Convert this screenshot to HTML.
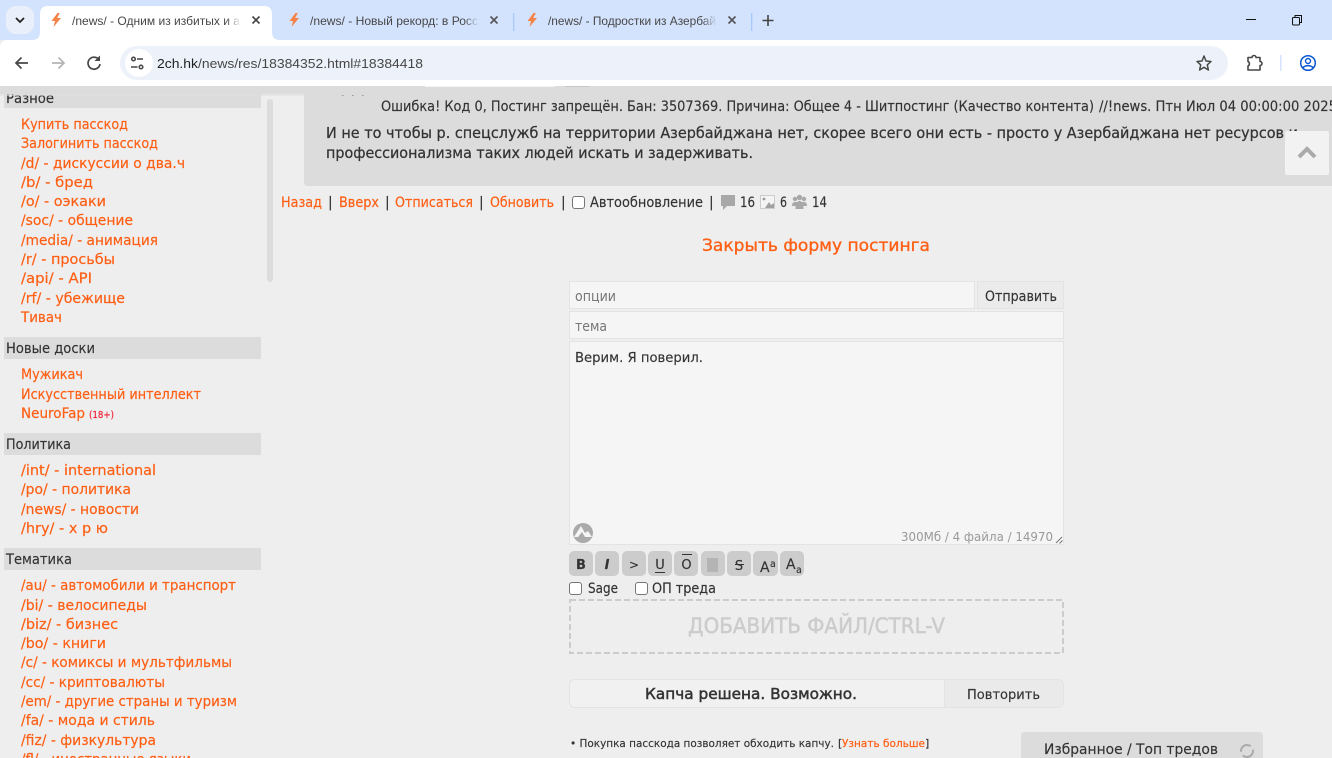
<!DOCTYPE html>
<html lang="ru"><head><meta charset="utf-8"><title>/news/</title>
<style>
html,body{margin:0;padding:0;width:1332px;height:758px;overflow:hidden;background:#eee}
svg{display:block;position:absolute;left:0;top:0}
text{font-family:"DejaVu Sans","Liberation Sans",sans-serif;font-size:14px;fill:#333;stroke:#333;stroke-width:.15;white-space:pre}
.l{fill:#ff5f14;stroke:#ff5f14;stroke-width:.2}
.c{font-family:"Liberation Sans",sans-serif;font-size:12px;fill:#474747;stroke:none}
.a{font-family:"Liberation Sans",sans-serif;font-size:13px;fill:#474747;stroke:none}
.p{font-size:15px;fill:#333;stroke-width:.25}
.b{font-size:13px;fill:#333;text-anchor:middle}
</style></head><body>
<svg width="1332" height="758" viewBox="0 0 1332 758" xmlns="http://www.w3.org/2000/svg">
<defs>
<linearGradient id="fw" x1="0" x2="1"><stop offset="0" stop-color="#fff" stop-opacity="0"/><stop offset="1" stop-color="#fff"/></linearGradient>
<linearGradient id="fb" x1="0" x2="1"><stop offset="0" stop-color="#d3e3fd" stop-opacity="0"/><stop offset="1" stop-color="#d3e3fd"/></linearGradient>
<path id="bolt" d="M6.500 0 L0.500 8 L4 8 L2.500 14 L10 5 L6.200 5 L8.800 0 Z" fill="#f4834a"/>
</defs>

<!-- page -->
<rect width="1332" height="758" fill="#eee"/>
<!-- sidebar bands -->
<rect x="4" y="90" width="257" height="18" fill="#dcdcdc"/>
<text x="6" y="103" textLength="48" lengthAdjust="spacingAndGlyphs">Разное</text>
<rect x="267" y="99" width="6" height="183" rx="3" fill="#dcdcdc"/>
<g class="side">
<text class="l" x="21" y="129" textLength="107" lengthAdjust="spacingAndGlyphs">Купить пасскод</text>
<text class="l" x="21" y="148" textLength="137" lengthAdjust="spacingAndGlyphs">Залогинить пасскод</text>
<text class="l" x="21" y="168" textLength="164" lengthAdjust="spacingAndGlyphs">/d/ - дискуссии о два.ч</text>
<text class="l" x="21" y="187" textLength="72" lengthAdjust="spacingAndGlyphs">/b/ - бред</text>
<text class="l" x="21" y="206" textLength="85" lengthAdjust="spacingAndGlyphs">/o/ - оэкаки</text>
<text class="l" x="21" y="225" textLength="112" lengthAdjust="spacingAndGlyphs">/soc/ - общение</text>
<text class="l" x="21" y="245" textLength="137" lengthAdjust="spacingAndGlyphs">/media/ - анимация</text>
<text class="l" x="21" y="264" textLength="94" lengthAdjust="spacingAndGlyphs">/r/ - просьбы</text>
<text class="l" x="21" y="283" textLength="71" lengthAdjust="spacingAndGlyphs">/api/ - API</text>
<text class="l" x="21" y="303" textLength="104" lengthAdjust="spacingAndGlyphs">/rf/ - убежище</text>
<text class="l" x="21" y="322" textLength="41" lengthAdjust="spacingAndGlyphs">Тивач</text>

<rect x="4" y="337" width="257" height="22" fill="#dcdcdc"/>
<text x="6" y="353" textLength="89" lengthAdjust="spacingAndGlyphs">Новые доски</text>
<text class="l" x="21" y="379" textLength="62" lengthAdjust="spacingAndGlyphs">Мужикач</text>
<text class="l" x="21" y="399" textLength="180" lengthAdjust="spacingAndGlyphs">Искусственный интеллект</text>
<text class="l" x="21" y="418" textLength="64" lengthAdjust="spacingAndGlyphs">NeuroFap</text>
<text x="89" y="418" textLength="25" lengthAdjust="spacingAndGlyphs" style="font-size:10px;fill:#f0142a;stroke:#f0142a">(18+)</text>

<rect x="4" y="433" width="257" height="22" fill="#dcdcdc"/>
<text x="6" y="449" textLength="65" lengthAdjust="spacingAndGlyphs">Политика</text>
<text class="l" x="21" y="475" textLength="135" lengthAdjust="spacingAndGlyphs">/int/ - international</text>
<text class="l" x="21" y="494" textLength="110" lengthAdjust="spacingAndGlyphs">/po/ - политика</text>
<text class="l" x="21" y="514" textLength="118" lengthAdjust="spacingAndGlyphs">/news/ - новости</text>
<text class="l" x="21" y="533" textLength="87" lengthAdjust="spacingAndGlyphs">/hry/ - х р ю</text>

<rect x="4" y="548" width="257" height="22" fill="#dcdcdc"/>
<text x="6" y="564" textLength="66" lengthAdjust="spacingAndGlyphs">Тематика</text>
<text class="l" x="21" y="590" textLength="215" lengthAdjust="spacingAndGlyphs">/au/ - автомобили и транспорт</text>
<text class="l" x="21" y="610" textLength="126" lengthAdjust="spacingAndGlyphs">/bi/ - велосипеды</text>
<text class="l" x="21" y="629" textLength="97" lengthAdjust="spacingAndGlyphs">/biz/ - бизнес</text>
<text class="l" x="21" y="648" textLength="85" lengthAdjust="spacingAndGlyphs">/bo/ - книги</text>
<text class="l" x="21" y="667" textLength="211" lengthAdjust="spacingAndGlyphs">/c/ - комиксы и мультфильмы</text>
<text class="l" x="21" y="687" textLength="144" lengthAdjust="spacingAndGlyphs">/cc/ - криптовалюты</text>
<text class="l" x="21" y="706" textLength="216" lengthAdjust="spacingAndGlyphs">/em/ - другие страны и туризм</text>
<text class="l" x="21" y="725" textLength="134" lengthAdjust="spacingAndGlyphs">/fa/ - мода и стиль</text>
<text class="l" x="21" y="745" textLength="135" lengthAdjust="spacingAndGlyphs">/fiz/ - физкультура</text>
<text class="l" x="21" y="764" textLength="170" lengthAdjust="spacingAndGlyphs">/fl/ - иностранные языки</text>
</g>

<!-- post -->
<path d="M304 90 H1332 V186 H308 Q304 186 304 182 Z" fill="#dcdcdc"/>
<text x="381" y="111" textLength="713" lengthAdjust="spacingAndGlyphs">Ошибка! Код 0, Постинг запрещён. Бан: 3507369. Причина: Общее 4 - Шитпостинг (Качество контента)</text>
<text x="1099" y="111" textLength="238" lengthAdjust="spacingAndGlyphs">//!news. Птн Июл 04 00:00:00 2025</text>
<text class="p" x="326" y="138" textLength="972" lengthAdjust="spacingAndGlyphs">И не то чтобы р. спецслужб на территории Азербайджана нет, скорее всего они есть - просто у Азербайджана нет ресурсов и</text>
<text class="p" x="326" y="158" textLength="427" lengthAdjust="spacingAndGlyphs">профессионализма таких людей искать и задерживать.</text>
<rect x="1285" y="131" width="44" height="44" rx="2" fill="#f2f2f2"/>
<path d="M1299 157 L1307 149 L1315 157" fill="none" stroke="#aaa" stroke-width="4"/>

<!-- nav line -->
<text class="l" x="281" y="207" textLength="41" lengthAdjust="spacingAndGlyphs">Назад</text>
<text x="328" y="207">|</text>
<text class="l" x="339" y="207" textLength="40" lengthAdjust="spacingAndGlyphs">Вверх</text>
<text x="385" y="207">|</text>
<text class="l" x="395" y="207" textLength="78" lengthAdjust="spacingAndGlyphs">Отписаться</text>
<text x="479" y="207">|</text>
<text class="l" x="490" y="207" textLength="64" lengthAdjust="spacingAndGlyphs">Обновить</text>
<text x="561" y="207">|</text>
<rect x="572.500" y="196.500" width="12" height="12" rx="2.500" fill="#fff" stroke="#767676"/>
<text x="590" y="207" textLength="113" lengthAdjust="spacingAndGlyphs">Автообновление</text>
<text x="709" y="207">|</text>
<path d="M721 195 H735 V206 H727 L723 210 V206 H721 Z" fill="#a8a8a8"/>
<text x="740" y="207" textLength="15" lengthAdjust="spacingAndGlyphs">16</text>
<rect x="760.500" y="195.500" width="14" height="13" fill="#f4f4f4" stroke="#ccc"/>
<path d="M765 208 L769 202 L771 205 L774 203 V208 Z" fill="#a0a0a0"/><circle cx="764" cy="199" r="1.400" fill="#999"/>
<text x="780" y="207" textLength="7" lengthAdjust="spacingAndGlyphs">6</text>
<g fill="#a8a8a8"><circle cx="795" cy="199" r="2.200"/><circle cx="804" cy="199" r="2.200"/><circle cx="799.500" cy="197.500" r="2.700"/><path d="M792 206 Q792 202 795 202 H804 Q807 202 807 206 H792 Z"/><path d="M795.500 209 Q795.500 201 799.500 201 Q803.500 201 803.500 209 Z"/></g>
<text x="812" y="207" textLength="15" lengthAdjust="spacingAndGlyphs">14</text>

<text class="l" x="702" y="251" textLength="228" lengthAdjust="spacingAndGlyphs" style="font-size:17px;stroke-width:.35">Закрыть форму постинга</text>

<!-- form -->
<g fill="#f5f5f5" stroke="#e3e3e3">
<rect x="569.500" y="281.500" width="405" height="27"/>
<rect x="569.500" y="311.500" width="494" height="27"/>
<rect x="569.500" y="341.500" width="494" height="203"/>
</g>
<rect x="977.500" y="281.500" width="86" height="27" fill="#ebebeb" stroke="#e3e3e3"/>
<text x="575" y="301" textLength="41" lengthAdjust="spacingAndGlyphs" style="fill:#777;stroke:none">опции</text>
<text x="575" y="331" textLength="32" lengthAdjust="spacingAndGlyphs" style="fill:#777;stroke:none">тема</text>
<text x="985" y="301" textLength="72" lengthAdjust="spacingAndGlyphs">Отправить</text>
<text x="575" y="362" textLength="128" lengthAdjust="spacingAndGlyphs" style="font-size:13px">Верим. Я поверил.</text>
<circle cx="583" cy="533" r="10" fill="#aaa"/>
<path d="M574 537 L581 526 L585 533 L588 531 L592 537 L585 537 L582 532 L578 537 Z" fill="#f5f5f5"/>
<text x="901" y="541" textLength="152" lengthAdjust="spacingAndGlyphs" style="font-size:12px;fill:#999;stroke:none">300Мб / 4 файла / 14970</text>
<path d="M1056 543 L1062 537 M1059.500 543.500 L1062.500 540.500" stroke="#777" stroke-width="1"/>

<g fill="#ccc">
<rect x="569" y="551" width="24" height="25" rx="5"/>
<rect x="595" y="551" width="24" height="25" rx="5"/>
<rect x="622" y="551" width="24" height="25" rx="5"/>
<rect x="648" y="551" width="24" height="25" rx="5"/>
<rect x="674" y="551" width="24" height="25" rx="5"/>
<rect x="701" y="551" width="24" height="25" rx="5"/>
<rect x="727" y="551" width="24" height="25" rx="5"/>
<rect x="753" y="551" width="25" height="25" rx="5"/>
<rect x="780" y="551" width="24" height="25" rx="5"/>
</g>
<rect x="707" y="558" width="11" height="14" fill="#b4b4b4"/>
<text class="b" x="581" y="569" style="font-weight:bold">B</text>
<text class="b" x="607" y="569" style="font-style:italic;font-weight:bold">I</text>
<text class="b" x="634" y="569" style="font-size:12px">&gt;</text>
<text class="b" x="660" y="569">U</text><path d="M655 572.500 H665" stroke="#333"/>
<text class="b" x="686.500" y="569">O</text><path d="M682 554.500 H692" stroke="#333"/>
<text class="b" x="739" y="570">S</text><path d="M735 564.500 H744" stroke="#333"/>
<text x="760" y="572" style="font-size:14px">A</text><text x="770" y="567" style="font-size:9.500px">a</text>
<text x="786" y="569" style="font-size:14px">A</text><text x="796" y="573" style="font-size:9.500px">a</text>

<rect x="569.500" y="582.500" width="12" height="12" rx="2.500" fill="#fff" stroke="#767676"/>
<text x="588" y="593" textLength="30" lengthAdjust="spacingAndGlyphs">Sage</text>
<rect x="635.500" y="582.500" width="12" height="12" rx="2.500" fill="#fff" stroke="#767676"/>
<text x="652" y="593" textLength="64" lengthAdjust="spacingAndGlyphs">ОП треда</text>
<rect x="570" y="600" width="493" height="53" fill="none" stroke="#ccc" stroke-width="2" stroke-dasharray="6 3"/>
<text x="688" y="633" textLength="257" lengthAdjust="spacingAndGlyphs" style="font-size:21px;fill:#ccc;stroke:#ccc;stroke-width:.5">ДОБАВИТЬ ФАЙЛ/CTRL-V</text>

<!-- captcha -->
<rect x="569.500" y="679.500" width="494" height="28" rx="5" fill="#f1f1f1" stroke="#e3e3e3"/>
<path d="M944.500 680 H1058 Q1063 680 1063 685 V702 Q1063 707 1058 707 H944.500 Z" fill="#eaeaea"/>
<path d="M944.500 680 V707" stroke="#e3e3e3"/>
<text x="645" y="699" textLength="212" lengthAdjust="spacingAndGlyphs" style="font-size:15.500px;stroke-width:.5">Капча решена. Возможно.</text>
<text x="967" y="699" textLength="73" lengthAdjust="spacingAndGlyphs" style="font-size:13px">Повторить</text>

<text x="570" y="747" textLength="264" lengthAdjust="spacingAndGlyphs" style="font-size:11px">• Покупка пасскода позволяет обходить капчу.</text>
<text x="838" y="747" style="font-size:11px">[</text>
<text class="l" x="842" y="747" textLength="83" lengthAdjust="spacingAndGlyphs" style="font-size:11px">Узнать больше</text>
<text x="925" y="747" style="font-size:11px">]</text>

<path d="M1021 758 V736 Q1021 732 1025 732 H1259 Q1263 732 1263 736 V758 Z" fill="#dcdcdc"/>
<text x="1044" y="754" textLength="174" lengthAdjust="spacingAndGlyphs">Избранное / Топ тредов</text>
<circle cx="1247" cy="751" r="6" fill="none" stroke="#aaa" stroke-width="2" stroke-dasharray="14 4"/>

<!-- header overlay -->
<rect x="0" y="86" width="1332" height="8" fill="#dcdcdc"/>
<rect x="0" y="94" width="304" height="2" fill="#dfdfdf" opacity=".6"/>
<rect x="425" y="86" width="130" height="1" fill="#f4f4f4"/>
<rect x="565" y="86" width="25" height="1" fill="#c8c8c8"/>
<path d="M342 95.500 h1.500 M352 95.500 h1.500 M362 95.500 h1.500" stroke="#999" stroke-width="1"/>

<!-- browser chrome -->
<rect x="0" y="0" width="1332" height="40" fill="#d3e3fd"/>
<path d="M0 86 V48 Q0 40 8 40 H1332 V86 Z" fill="#fff"/>
<path d="M32 40 Q40 40 40 32 V14 Q40 6 48 6 H264 Q272 6 272 14 V32 Q272 40 280 40 Z" fill="#fff"/>
<rect x="6" y="6" width="28" height="28" rx="10" fill="#e9f0fb"/>
<path d="M16 18 L20 22 L24 18" fill="none" stroke="#222" stroke-width="1.800"/>
<use href="#bolt" x="51" y="13"/>
<text class="c" x="72" y="25" textLength="168" lengthAdjust="spacingAndGlyphs">/news/ - Одним из избитых и а</text>
<rect x="226" y="8" width="15" height="28" fill="url(#fw)"/>
<path d="M252.500 16.500 L259.500 23.500 M259.500 16.500 L252.500 23.500" stroke="#444" stroke-width="1.600"/>
<use href="#bolt" x="289" y="13"/>
<text class="c" x="310" y="25" textLength="168" lengthAdjust="spacingAndGlyphs">/news/ - Новый рекорд: в Росс</text>
<rect x="464" y="8" width="15" height="28" fill="url(#fb)"/>
<path d="M490.500 16.500 L497.500 23.500 M497.500 16.500 L490.500 23.500" stroke="#555" stroke-width="1.600"/>
<rect x="513" y="13" width="1.300" height="18" fill="#a8c7fa"/>
<use href="#bolt" x="527" y="13"/>
<text class="c" x="548" y="25" textLength="168" lengthAdjust="spacingAndGlyphs">/news/ - Подростки из Азербай</text>
<rect x="702" y="8" width="15" height="28" fill="url(#fb)"/>
<path d="M728.500 16.500 L735.500 23.500 M735.500 16.500 L728.500 23.500" stroke="#555" stroke-width="1.600"/>
<rect x="751" y="13" width="1.300" height="18" fill="#a8c7fa"/>
<path d="M768 15 V26 M762.500 20.500 H773.500" stroke="#444" stroke-width="1.600"/>
<path d="M1246 19.500 H1256" stroke="#111" stroke-width="1"/>
<path d="M1295 17.500 V15.500 H1301.500 V22.500 H1299.500" fill="none" stroke="#111"/><rect x="1292.500" y="17.500" width="7" height="7.500" rx="1" fill="none" stroke="#111"/>

<path d="M28 63 H16.500 M21.500 57.500 L16 63 L21.500 68.500" fill="none" stroke="#474747" stroke-width="1.700"/>
<path d="M52 63 H63.500 M58.500 57.500 L64 63 L58.500 68.500" fill="none" stroke="#b4b4b4" stroke-width="1.700"/>
<path d="M98.800 59.500 A6 6 0 1 0 100 64" fill="none" stroke="#474747" stroke-width="1.700"/><path d="M100 55.500 V61 H94.500 Z" fill="#474747"/>

<rect x="120" y="46" width="1108" height="34" rx="17" fill="#edf2fa"/>
<rect x="125" y="49" width="28" height="28" rx="14" fill="#fff"/>
<g fill="none" stroke="#444" stroke-width="1.500"><circle cx="133.500" cy="59" r="1.800"/><path d="M137 59 H143"/><circle cx="141" cy="67" r="1.800"/><path d="M131 67 H137.500"/></g>
<text class="a" x="157" y="68" textLength="266" lengthAdjust="spacingAndGlyphs"><tspan style="fill:#1f1f1f">2ch.hk</tspan>/news/res/18384352.html#18384418</text>
<path d="M1204 56 L1206 61 L1211 61.500 L1207.300 64.800 L1208.400 70 L1204 67.300 L1199.600 70 L1200.700 64.800 L1197 61.500 L1202 61 Z" fill="none" stroke="#474747" stroke-width="1.500" stroke-linejoin="round"/>
<path d="M1248 57.500 H1252 A2 2 0 0 1 1256 57.500 H1260 V61.500 A2 2 0 0 1 1260 65.500 V70 H1248 V66 A2.500 2.500 0 0 0 1248 61.500 Z" fill="none" stroke="#474747" stroke-width="1.600" stroke-linejoin="round"/>
<rect x="1280" y="55" width="1.500" height="16" fill="#d3e3fd"/>
<circle cx="1308" cy="63" r="7.300" fill="none" stroke="#0b57d0" stroke-width="1.500"/>
<circle cx="1308" cy="61" r="2.500" fill="none" stroke="#0b57d0" stroke-width="1.400"/>
<path d="M1302.800 67.500 Q1308 63.800 1313.200 67.500" fill="none" stroke="#0b57d0" stroke-width="1.400"/>
</svg>
</body></html>
